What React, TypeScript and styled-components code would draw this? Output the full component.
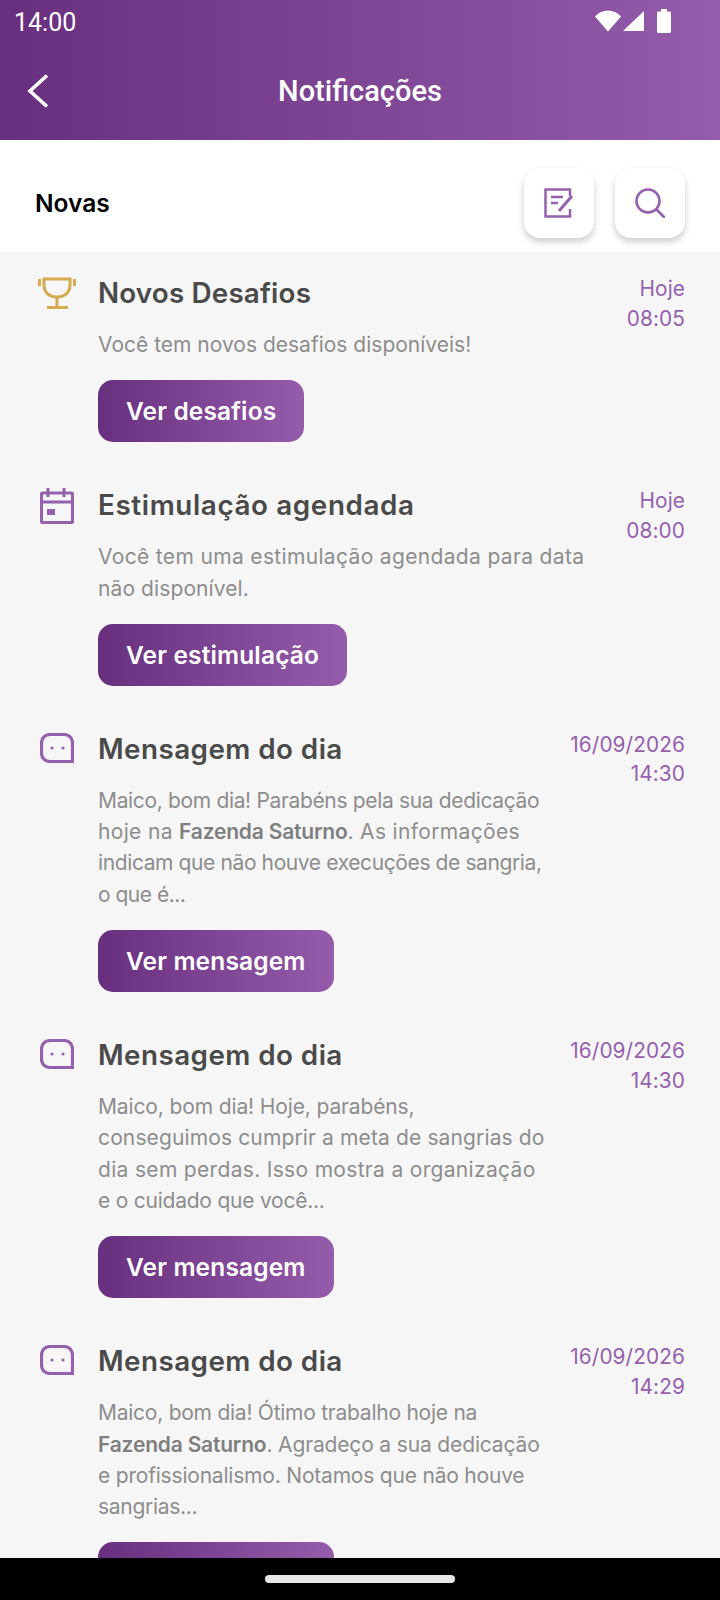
import { ReactNode } from "react";
import styled, { createGlobalStyle } from "styled-components";

const bodyFont = `"Inter", "Noto Sans", sans-serif`;
const purple = "#9560ae";
const gradient = "linear-gradient(90deg, #682f7f 0%, #955cab 100%)";

const GlobalStyle = createGlobalStyle`
  html, body {
    margin: 0;
    padding: 0;
    background: #000;
  }
`;

const Screen = styled.div`
  width: 720px;
  height: 1600px;
  display: flex;
  flex-direction: column;
  overflow: hidden;
  background: #f6f6f6;
`;

const Header = styled.header`
  height: 140px;
  flex-shrink: 0;
  display: flex;
  flex-direction: column;
  background: ${gradient};
  color: #fff;
  font-family: "Roboto", sans-serif;
`;

const StatusBar = styled.div`
  height: 44px;
  padding: 0 49px 0 14px;
  display: flex;
  align-items: center;
  justify-content: space-between;
  font-size: 25px;
`;

const StatusIcons = styled.div`
  display: flex;
  align-items: center;
  gap: 2px;
  margin-top: -3px;
`;

const BatterySlot = styled.div`
  margin-left: 10px;
  display: flex;
`;

const TitleRow = styled.div`
  flex: 1;
  padding: 0 0 2px 27px;
  display: flex;
  align-items: center;
  position: relative;
`;

const Title = styled.h1`
  position: absolute;
  left: 0;
  right: 0;
  margin: 0;
  text-align: center;
  font-size: 29px;
  font-weight: 500;
`;

const SubBar = styled.div`
  height: 112px;
  box-sizing: border-box;
  flex-shrink: 0;
  padding: 12px 35px 0 35px;
  display: flex;
  align-items: center;
  gap: 21px;
  background: #fff;
`;

const SubTitle = styled.span`
  flex: 1;
  padding-top: 1px;
  font-family: ${bodyFont};
  font-size: 24.5px;
  font-weight: 600;
  color: #000;
`;

const IconButton = styled.div`
  width: 70px;
  height: 70px;
  margin-top: 2px;
  display: flex;
  align-items: center;
  justify-content: center;
  border-radius: 16px;
  background: #fff;
  box-shadow: 0 4px 7px rgba(0, 0, 0, 0.2);
`;

const List = styled.div`
  flex: 1;
  min-height: 0;
  overflow: hidden;
  padding: 20px 35px 0 36px;
  display: flex;
  flex-direction: column;
  gap: 42px;
`;

const Item = styled.article`
  display: flex;
  flex-shrink: 0;
`;

const ItemIcon = styled.div<{ $top: number; $left: number }>`
  width: 62px;
  flex-shrink: 0;
  box-sizing: border-box;
  padding: ${(p) => p.$top}px 0 0 ${(p) => p.$left}px;
`;

const ItemBody = styled.div`
  flex: 1;
`;

const ItemTitle = styled.h2<{ $track: number }>`
  margin: 0 0 16px;
  padding-top: 1px;
  font-family: ${bodyFont};
  font-size: 27.8px;
  line-height: 40px;
  letter-spacing: ${(p) => p.$track}px;
  font-weight: 600;
  color: #4a4a4a;
`;

const ItemText = styled.div`
  margin: 0 0 20px;
  font-family: ${bodyFont};
  font-size: 21px;
  line-height: 31.3px;
  color: #8d8d8d;
  white-space: nowrap;

  b {
    font-weight: 600;
    letter-spacing: -0.2px;
    color: #7f7f7f;
  }
`;

const Line = styled.span<{ $track?: number }>`
  display: block;
  letter-spacing: ${(p) => p.$track ?? 0}px;
`;

const ItemAction = styled.div`
  height: 62px;
  width: fit-content;
  padding: 0 28px;
  display: flex;
  align-items: center;
  border-radius: 15px;
  background: ${gradient};
  font-family: ${bodyFont};
  font-size: 24.5px;
  letter-spacing: 0.15px;
  font-weight: 600;
  color: #fff;
`;

const ItemDate = styled.div`
  flex-shrink: 0;
  margin-top: 2px;
  text-align: right;
  font-family: ${bodyFont};
  font-size: 20.8px;
  line-height: 29.5px;
  letter-spacing: 0.1px;
  color: ${purple};
`;

const NavBar = styled.div`
  height: 42px;
  flex-shrink: 0;
  display: flex;
  justify-content: center;
  padding-top: 17px;
  box-sizing: border-box;
  background: #000;
`;

const NavHandle = styled.div`
  width: 190px;
  height: 8px;
  border-radius: 4px;
  background: #e6e6e6;
`;

const TrophyIcon = () => (
  <svg width="38" height="32" viewBox="0 0 38 32" fill="none" stroke="#d6aa4f" strokeWidth="3">
    <path d="M6 2h26v6c0 7-5 12-13 12S6 15 6 8z" />
    <path d="M19 20v9M9 30.500h21" />
    <path d="M1.500 2v7M36.500 2v7" />
  </svg>
);

const CalendarIcon = () => (
  <svg width="34" height="36" viewBox="0 0 34 36" fill="none" stroke={purple} strokeWidth="3">
    <rect x="1.500" y="5" width="31" height="29.500" rx="1" />
    <path d="M1.500 14h31M8 0v9M24 0v9" />
    <rect x="7" y="21" width="8" height="6" fill={purple} stroke="none" />
  </svg>
);

const ChatIcon = () => (
  <svg width="34" height="30" viewBox="0 0 34 30" fill="none">
    <path
      d="M10 1.500h14c5 0 8.500 3.500 8.500 8.500v18.500H10c-5 0-8.500-3.500-8.500-8.500V10c0-5 3.500-8.500 8.500-8.500z"
      stroke={purple}
      strokeWidth="3.200"
    />
    <circle cx="12" cy="15" r="1.600" fill={purple} />
    <circle cx="23" cy="15" r="1.600" fill={purple} />
  </svg>
);

const NoteIcon = () => (
  <svg width="30" height="30" viewBox="0 0 30 30" fill="none" stroke={purple} strokeWidth="2.500">
    <path d="M26 8V1.500H1.500v27H26V21" />
    <path d="M7 9h12M7 15h7" strokeWidth="2.600" />
    <path d="M15 23l13-15" strokeWidth="3" />
  </svg>
);

const SearchIcon = () => (
  <svg width="30" height="30" viewBox="0 0 30 30" fill="none" stroke={purple} strokeWidth="2.600">
    <circle cx="13" cy="13" r="11.500" />
    <path d="M22 22l7 7" strokeLinecap="round" />
  </svg>
);

const WifiIcon = () => (
  <svg width="26" height="22" viewBox="0 0 26 22" fill="#fff">
    <path d="M0 6.500C3.500 2.500 8 .500 13 .500s9.500 2 13 6L13 21.500z" />
  </svg>
);

const SignalIcon = () => (
  <svg width="22" height="22" viewBox="0 0 22 22" fill="#fff">
    <path d="M21 1v20H0z" />
  </svg>
);

const BatteryIcon = () => (
  <svg width="14" height="24" viewBox="0 0 14 24" fill="#fff">
    <path d="M4 0h6v2.500h2.500c.8 0 1.500.7 1.500 1.500v18.500c0 .8-.7 1.500-1.500 1.500h-11C.7 24 0 23.300 0 22.500V4c0-.8.700-1.500 1.500-1.500H4z" />
  </svg>
);

type NoticeProps = {
  icon: ReactNode;
  iconTop: number;
  iconLeft?: number;
  title: string;
  titleTrack: number;
  day: string;
  time: string;
  action: string;
  children: ReactNode;
};

const Notice = ({ icon, iconTop, iconLeft = 4, title, titleTrack, day, time, action, children }: NoticeProps) => (
  <Item>
    <ItemIcon $top={iconTop} $left={iconLeft}>
      {icon}
    </ItemIcon>
    <ItemBody>
      <ItemTitle $track={titleTrack}>{title}</ItemTitle>
      <ItemText>{children}</ItemText>
      <ItemAction>{action}</ItemAction>
    </ItemBody>
    <ItemDate>
      {day}
      <br />
      {time}
    </ItemDate>
  </Item>
);

const App = () => {
  return (
    <Screen>
      <GlobalStyle />
      <Header>
        <StatusBar>
          <span>14:00</span>
          <StatusIcons>
            <WifiIcon />
            <SignalIcon />
            <BatterySlot>
              <BatteryIcon />
            </BatterySlot>
          </StatusIcons>
        </StatusBar>
        <TitleRow>
          <svg width="22" height="34" viewBox="0 0 22 34" fill="none" stroke="#fff" strokeWidth="3.600">
            <path d="M20 1.500L3 17l17 15.500" />
          </svg>
          <Title>Notificações</Title>
        </TitleRow>
      </Header>
      <SubBar>
        <SubTitle>Novas</SubTitle>
        <IconButton>
          <NoteIcon />
        </IconButton>
        <IconButton>
          <SearchIcon />
        </IconButton>
      </SubBar>
      <List>
        <Notice icon={<TrophyIcon />} iconTop={5} iconLeft={2} title="Novos Desafios" titleTrack={0.17} day="Hoje" time="08:05" action="Ver desafios">
          <Line>Você tem novos desafios disponíveis!</Line>
        </Notice>
        <Notice icon={<CalendarIcon />} iconTop={4} title="Estimulação agendada" titleTrack={0.62} day="Hoje" time="08:00" action="Ver estimulação">
          <Line $track={0.34}>Você tem uma estimulação agendada para data</Line>
          <Line $track={0.1}>não disponível.</Line>
        </Notice>
        <Notice icon={<ChatIcon />} iconTop={5} title="Mensagem do dia" titleTrack={0.45} day="16/09/2026" time="14:30" action="Ver mensagem">
          <Line $track={-0.34}>Maico, bom dia! Parabéns pela sua dedicação</Line>
          <Line $track={0.34}>
            hoje na <b>Fazenda Saturno</b>. As informações
          </Line>
          <Line $track={-0.39}>indicam que não houve execuções de sangria,</Line>
          <Line $track={-0.5}>o que é...</Line>
        </Notice>
        <Notice icon={<ChatIcon />} iconTop={5} title="Mensagem do dia" titleTrack={0.45} day="16/09/2026" time="14:30" action="Ver mensagem">
          <Line $track={-0.13}>Maico, bom dia! Hoje, parabéns,</Line>
          <Line $track={0.13}>conseguimos cumprir a meta de sangrias do</Line>
          <Line $track={0.32}>dia sem perdas. Isso mostra a organização</Line>
          <Line $track={-0.23}>e o cuidado que você...</Line>
        </Notice>
        <Notice icon={<ChatIcon />} iconTop={5} title="Mensagem do dia" titleTrack={0.45} day="16/09/2026" time="14:29" action="Ver mensagem">
          <Line $track={-0.25}>Maico, bom dia! Ótimo trabalho hoje na</Line>
          <Line $track={-0.15}>
            <b>Fazenda Saturno</b>. Agradeço a sua dedicação
          </Line>
          <Line $track={-0.2}>e profissionalismo. Notamos que não houve</Line>
          <Line $track={-0.3}>sangrias...</Line>
        </Notice>
      </List>
      <NavBar>
        <NavHandle />
      </NavBar>
    </Screen>
  );
};

export default App;
